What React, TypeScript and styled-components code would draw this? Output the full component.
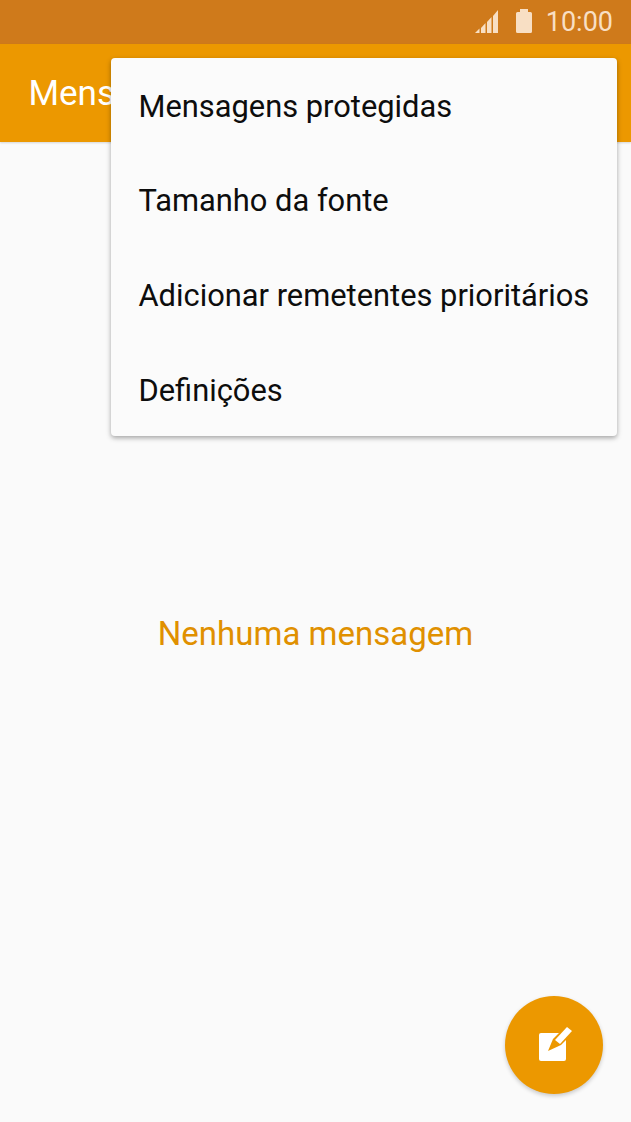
import styled, { createGlobalStyle } from "styled-components";

const GlobalStyle = createGlobalStyle`
    html, body {
        margin: 0;
        padding: 0;
        background-color: #fafafa;
        font-family: Roboto, "Liberation Sans", sans-serif;
    }
`

const Screen = styled.div`
    position: relative;
    width: 631px;
    height: 1122px;
    overflow: hidden;
    background-color: #fafafa;
    display: flex;
    flex-direction: column;
`

const StatusBar = styled.div`
    height: 44px;
    background-color: #cf7a1b;
    display: flex;
    justify-content: flex-end;
    align-items: center;
    padding-right: 18px;
    color: #f8dfc4;
`

const Clock = styled.span`
    font-size: 27px;
    line-height: 44px;
    margin-left: 14px;
`

const SignalIcon = styled.svg`
    width: 24px;
    height: 24px;
    margin-right: 17px;
    fill: #f8dfc4;
`

const BatteryIcon = styled.svg`
    width: 16px;
    height: 24px;
    margin-top: -2px;
    fill: #f8dfc4;
`

const AppBar = styled.div`
    height: 98px;
    background-color: #ec9800;
    display: flex;
    align-items: center;
    padding-left: 28.5px;
    box-shadow: 0 1px 2px rgba(0, 0, 0, 0.15);
`

const Title = styled.h1`
    margin: 0;
    font-size: 35px;
    font-weight: 400;
    color: #ffffff;
`

const Menu = styled.ul`
    position: absolute;
    top: 58px;
    left: 111px;
    width: 506px;
    height: 378px;
    margin: 0;
    padding: 1px 0 0;
    box-sizing: border-box;
    list-style: none;
    background-color: #fbfbfb;
    border-radius: 4px;
    box-shadow: 0 2px 5px rgba(0, 0, 0, 0.35);
    display: flex;
    flex-direction: column;
`

const MenuItem = styled.li`
    flex: 0 0 94.6px;
    display: flex;
    align-items: center;
    padding-left: 27.5px;
    font-size: 30.85px;
    color: #0d0d0d;
    white-space: nowrap;
`

const Empty = styled.main`
    flex: 1;
    display: flex;
    justify-content: center;
    padding: 470px 0 0 0;
`

const EmptyText = styled.p`
    margin: 0;
    font-size: 33px;
    line-height: 44px;
    height: 44px;
    color: #e09000;
`

const Fab = styled.button`
    position: absolute;
    left: 505px;
    top: 996px;
    width: 98px;
    height: 98px;
    padding: 0;
    border: none;
    border-radius: 50%;
    background-color: #ec9800;
    box-shadow: 0 2px 4px rgba(0, 0, 0, 0.2);
    display: flex;
    align-items: center;
    justify-content: center;
`

const ComposeIcon = styled.svg`
    width: 36px;
    height: 36px;
    margin-top: -1px;
    fill: #ffffff;
`

const App = () => {
    return (
        <Screen>
            <GlobalStyle />
            <StatusBar>
                <SignalIcon viewBox="0 0 24 24">
                    <polygon points="0,23 4.500,18.500 4.500,23" />
                    <polygon points="6,18 10.500,13 10.500,23 6,23" />
                    <polygon points="12,12 16.500,7 16.500,23 12,23" />
                    <polygon points="18,6 23,0 23,23 18,23" />
                </SignalIcon>
                <BatteryIcon viewBox="0 0 16 24">
                    <path d="M4 0h8v3h2.500q1.500 0 1.500 1.500v18q0 1.500-1.500 1.500h-13q-1.500 0-1.500-1.500v-18q0-1.500 1.500-1.500h2.500z" />
                </BatteryIcon>
                <Clock>10:00</Clock>
            </StatusBar>
            <AppBar>
                <Title>Mensagens</Title>
            </AppBar>
            <Empty>
                <EmptyText>Nenhuma mensagem</EmptyText>
            </Empty>
            <Menu>
                <MenuItem>Mensagens protegidas</MenuItem>
                <MenuItem>Tamanho da fonte</MenuItem>
                <MenuItem>Adicionar remetentes prioritários</MenuItem>
                <MenuItem>Definições</MenuItem>
            </Menu>
            <Fab aria-label="Escrever">
                <ComposeIcon viewBox="0 0 36 36">
                    <path d="M5 6h23q2 0 2 2v24q0 2-2 2H5q-2 0-2-2V8q0-2 2-2z" />
                    <polygon fill="#ec9800" points="12,24 17,12 24,5 31,5 31,12 25,18" />
                    <polygon points="31,0 36,4 24,17 19,13" />
                </ComposeIcon>
            </Fab>
        </Screen>
    )
}

export default App;
